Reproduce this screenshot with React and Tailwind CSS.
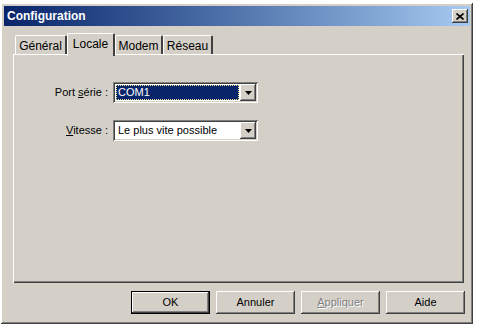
import React from "react";

const raised =
  "shadow-[inset_-1px_-1px_0_#404040,inset_1px_1px_0_#ffffff,inset_-2px_-2px_0_#808080,inset_2px_2px_0_#d4d0c8]";
const sunken =
  "shadow-[inset_1px_1px_0_#808080,inset_-1px_-1px_0_#ffffff,inset_2px_2px_0_#404040,inset_-2px_-2px_0_#d4d0c8]";

function Tab({ label, selected, w }) {
  if (selected) {
    return (
      <div
        className={`relative z-10 h-[23px] -mb-[2px] pt-[3px] text-center bg-[#d4d0c8] border-l border-t border-white border-r-2 border-r-[#404040] rounded-t-[2px] text-[12px] leading-[14px] ${w}`}
      >
        {label}
      </div>
    );
  }
  return (
    <div
      className={`h-[19px] pt-[3px] text-center bg-[#d4d0c8] border-l border-t border-white border-r-2 border-r-[#404040] rounded-t-[2px] text-[12px] leading-[14px] ${w}`}
    >
      {label}
    </div>
  );
}

function Combo({ children, selected }) {
  return (
    <div className={`w-[145px] h-[21px] bg-white ${sunken} p-[2px] flex`}>
      <div className="flex-1 flex items-center pl-[1px] pr-[1px]">
        {selected ? (
          <div className="w-full h-[15px] bg-[#0a246a] text-white border border-dotted border-[#f0e890] flex items-center pl-[1px] text-[11px] leading-none">
            {children}
          </div>
        ) : (
          <div className="pl-[2px] text-[11px] leading-none text-black">{children}</div>
        )}
      </div>
      <div className={`w-[16px] h-[17px] bg-[#d4d0c8] ${raised} flex items-center justify-center`}>
        <svg width="7" height="4" viewBox="0 0 7 4">
          <path d="M0 0h7L3.5 4z" fill="#000" />
        </svg>
      </div>
    </div>
  );
}

function Btn({ children, def, disabled }) {
  return (
    <div
      className={`w-[79px] h-[23px] bg-[#d4d0c8] flex items-center justify-center text-[11px] font-normal ${
        def
          ? "border border-black shadow-[inset_-1px_-1px_0_#404040,inset_1px_1px_0_#ffffff,inset_-2px_-2px_0_#808080]"
          : raised
      } ${disabled ? "text-[#808080] [text-shadow:1px_1px_0_#ffffff]" : "text-black"}`}
    >
      {children}
    </div>
  );
}

export default function App() {
  return (
    <div className="w-[479px] h-[326px] bg-white overflow-hidden font-['Liberation_Sans',Arial,sans-serif] text-black">
      <div
        className={`ml-[1px] mt-[3px] w-[472px] h-[321px] bg-[#d4d0c8] p-[3px] flex flex-col ${raised}`}
      >
        {/* title bar */}
        <div className="h-[20px] bg-linear-to-r from-[#0a246a] to-[#a6caf0] flex items-center justify-between pl-[3px] pr-[2px]">
          <span className="text-white font-bold text-[12px] leading-none">Configuration</span>
          <div className={`w-[16px] h-[14px] bg-[#d4d0c8] ${raised} flex items-center justify-center`}>
            <svg width="8" height="7" viewBox="0 0 8 7">
              <path d="M0.5 0.5L7.5 6.5M7.5 0.5L0.5 6.5" stroke="#000" strokeWidth="1.6" />
            </svg>
          </div>
        </div>

        {/* tabs */}
        <div className="ml-[9px] mt-[7px] h-[21px] flex items-end">
          <Tab label="Général" w="ml-[2px] w-[52px]" />
          <Tab label="Locale" selected w="w-[48px]" />
          <Tab label="Modem" w="w-[48px]" />
          <Tab label="Réseau" w="w-[50px]" />
        </div>

        {/* panel */}
        <div
          className={`ml-[9px] w-[451px] h-[229px] bg-[#d4d0c8] border-l border-t border-white shadow-[inset_-1px_-1px_0_#404040,inset_-2px_-2px_0_#808080] pt-[27px]`}
        >
          <div className="flex items-center">
            <div className="w-[95px] text-right text-[11px] leading-none pr-[1px]">
              Port <span className="underline">s</span>érie :
            </div>
            <div className="ml-[4px]">
              <Combo selected>COM1</Combo>
            </div>
          </div>
          <div className="flex items-center mt-[17px]">
            <div className="w-[95px] text-right text-[11px] leading-none pr-[1px]">
              <span className="underline">V</span>itesse :
            </div>
            <div className="ml-[4px]">
              <Combo>Le plus vite possible</Combo>
            </div>
          </div>
        </div>

        {/* buttons */}
        <div className="mt-[8px] w-[461px] flex justify-end gap-[6px]">
          <Btn def>OK</Btn>
          <Btn>Annuler</Btn>
          <Btn disabled>
            <span>
              <span className="underline">A</span>ppliquer
            </span>
          </Btn>
          <Btn>Aide</Btn>
        </div>
      </div>
    </div>
  );
}
